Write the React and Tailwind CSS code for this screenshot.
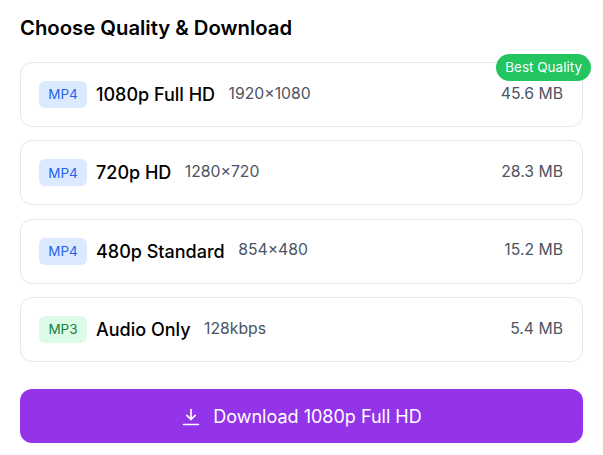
import React from 'react';

const options = [
    { format: 'MP4', label: '1080p Full HD', detail: '1920×1080', size: '45.6 MB', best: true },
    { format: 'MP4', label: '720p HD', detail: '1280×720', size: '28.3 MB' },
    { format: 'MP4', label: '480p Standard', detail: '854×480', size: '15.2 MB' },
    { format: 'MP3', label: 'Audio Only', detail: '128kbps', size: '5.4 MB' },
];

function App() {
    return (
        <div className="h-[455px] w-[603px] overflow-hidden bg-white px-5 pt-[14px] font-['Inter',sans-serif]">
            <h2 className="text-[20.3px] leading-[28px] font-semibold text-black">Choose Quality &amp; Download</h2>
            <div className="mt-[20px] flex flex-col gap-[13.6px]">
                {options.map((opt) => (
                    <div key={opt.label} className="relative flex h-[64.8px] items-center justify-between rounded-xl border border-[#e5e7eb] bg-white pr-[19px] pl-[18px]">
                        {opt.best && (
                            <span className="absolute -top-[9px] -right-[9px] rounded-full bg-[#22c55e] px-[9px] py-[3px] text-[13.5px] leading-[21px] text-white">
                                Best Quality
                            </span>
                        )}
                        <div className="flex items-center">
                            <span className={`flex h-[27px] w-[48px] items-center justify-center rounded-md text-[13.5px] ${opt.format === 'MP3' ? 'bg-[#dcfce7] text-[#15803d]' : 'bg-[#dbeafe] text-[#2563eb]'}`}>
                                {opt.format}
                            </span>
                            <span className="ml-[9px] text-[18px] font-medium text-black">{opt.label}</span>
                            <span className="ml-[13.5px] pb-[2px] text-[15.75px] text-[#4b5563]">{opt.detail}</span>
                        </div>
                        <span className="pb-[2px] text-[15.75px] text-[#4b5563]">{opt.size}</span>
                    </div>
                ))}
            </div>
            <button className="mt-[27px] flex h-[54px] w-full items-center justify-center gap-[12px] rounded-xl bg-[#9333ea] pt-[2px] text-[18px] text-white">
                <svg width="20" height="20" viewBox="0 0 24 24" fill="none" stroke="currentColor" strokeWidth="2" strokeLinecap="round" strokeLinejoin="round">
                    <path d="M12 3v12" />
                    <path d="M7 10l5 5 5-5" />
                    <path d="M3 21h18" />
                </svg>
                Download 1080p Full HD
            </button>
        </div>
    );
}

export default App;
